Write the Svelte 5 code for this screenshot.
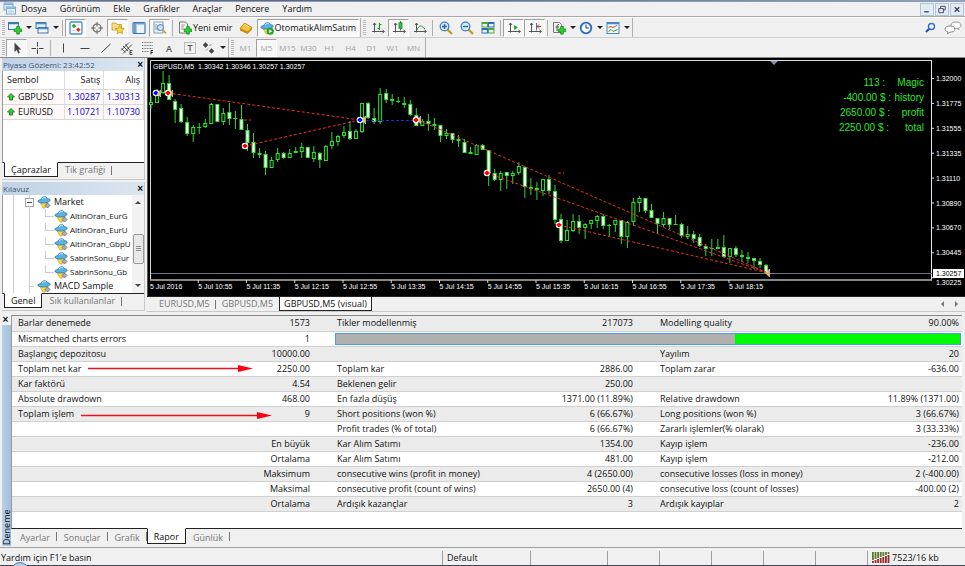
<script>
  const menus = ['Dosya', 'Görünüm', 'Ekle', 'Grafikler', 'Araçlar', 'Pencere', 'Yardım'];

  const mainTools = [
    { icon: 'newchart', label: 'Yeni grafik', drop: true },
    { icon: 'profiles', label: 'Profiller', drop: true },
    { sep: true },
    { icon: 'watch', label: 'Piyasa Gözlemi', on: true },
    { icon: 'target', label: 'Veri penceresi' },
    { icon: 'folder', label: 'Kılavuz', on: true },
    { icon: 'terminal', label: 'Terminal' },
    { icon: 'tester', label: 'Strateji deneme', on: true },
    { sep: true },
    { icon: 'order', label: 'Yeni emir', text: 'Yeni emir' },
    { icon: 'diamond', label: 'MetaEditor' },
    { icon: 'auto', label: 'OtomatikAlımSatım', text: 'OtomatikAlımSatım', on: true },
    { end: true },
    { icon: 'bars', label: 'Çubuk' },
    { icon: 'candles', label: 'Mum', on: true },
    { icon: 'line', label: 'Çizgi' },
    { sep: true },
    { icon: 'zoomin', label: 'Yakınlaştır' },
    { icon: 'zoomout', label: 'Uzaklaştır' },
    { icon: 'tile', label: 'Döşe' },
    { sep: true },
    { icon: 'scroll', label: 'Otomatik kaydır', on: true },
    { icon: 'shift', label: 'Grafik kaydır', on: true },
    { sep: true },
    { icon: 'indicators', label: 'Göstergeler', drop: true },
    { icon: 'clock', label: 'Periyotlar', drop: true },
    { icon: 'template', label: 'Şablonlar', drop: true }
  ];

  const drawTools = [
    { icon: 'cursor', label: 'İmleç', on: true },
    { icon: 'cross', label: 'Artı' },
    { sep: true },
    { icon: 'vline', label: 'Dikey çizgi' },
    { icon: 'hline', label: 'Yatay çizgi' },
    { icon: 'trend', label: 'Trend çizgisi' },
    { icon: 'channel', label: 'Kanal' },
    { icon: 'fibo', label: 'Fibonacci' },
    { icon: 'text', label: 'Metin' },
    { icon: 'label', label: 'Etiket' },
    { icon: 'arrows', label: 'Oklar', drop: true },
    { end: true },
    ...['M1', 'M5', 'M15', 'M30', 'H1', 'H4', 'D1', 'W1', 'MN'].map((p) => ({ period: p, on: p === 'M5' }))
  ];

  const quotes = [
    ['GBPUSD', '1.30287', '1.30313'],
    ['EURUSD', '1.10721', '1.10730']
  ];
  const advisors = ['AltinOran_EurG', 'AltinOran_EurU', 'AltinOran_GbpU', 'SabrinSonu_Eur', 'SabrinSonu_Gb'];

  // high, body top, body bottom, low; a trailing 1 marks a rising candle
  const candles = [
    [96,102,105,109,1],[89,93,103,103,1],[71,83,93,94,1],[75,83,100,100],[99,101,110,123],[104,108,122,123],
    [117,122,134,136],[125,127,134,142,1],[123,127,128,134,1],[119,123,127,128,1],[103,104,124,124,1],[104,104,122,122],
    [108,113,122,125,1],[103,112,119,125],[111,118,119,129],[105,119,130,130],[124,130,143,151],[133,142,153,158],
    [148,153,155,158],[151,154,168,175],[157,160,168,168,1],[148,153,160,162,1],[152,153,158,159],[149,153,158,158,1],
    [147,151,153,153,1],[143,147,152,158,1],[147,147,158,158],[146,152,159,162,1],[152,153,160,168],[145,146,161,161,1],
    [132,141,146,149,1],[135,136,142,146,1],[126,132,136,138,1],[121,131,139,140],[129,131,139,139,1],[103,103,132,133,1],
    [102,103,118,119],[108,118,122,124],[88,94,122,124,1],[89,93,100,103],[94,99,101,105],[97,101,102,103],
    [97,103,105,108],[100,104,115,116],[108,115,126,126],[119,121,126,126,1],[114,121,124,131],[118,124,126,130],
    [125,125,136,142],[129,133,136,139,1],[133,133,140,143],[135,139,141,147],[139,142,153,153],[147,152,154,154],
    [144,145,155,155,1],[144,145,150,150],[150,150,173,186],[169,173,180,181],[171,173,180,191,1],[172,172,176,189],
    [171,173,176,184,1],[162,166,173,175,1],[166,167,187,198],[178,187,189,195],[182,188,190,200],[179,179,191,196,1],
    [175,179,191,194],[185,191,220,224],[214,219,241,243],[220,230,241,241,1],[214,221,231,232,1],[215,221,228,234],
    [223,224,228,239,1],[220,220,224,229,1],[215,216,221,228,1],[214,216,226,229],[224,225,226,237],[220,220,225,232,1],
    [220,220,237,244],[221,222,237,248,1],[198,202,222,226,1],[196,198,203,212,1],[198,198,211,213],[204,210,218,218],
    [218,218,224,233],[212,218,225,227,1],[218,218,225,229],[215,224,225,225],[223,224,236,238],[226,234,237,239,1],
    [231,234,239,243],[234,237,246,247],[244,246,249,256],[239,248,249,256],[239,247,249,249,1],[235,247,257,257],
    [248,248,257,263,1],[246,248,255,257],[250,255,257,262],[252,257,259,263],[258,258,261,269],[258,261,265,268],
    [264,265,273,274]
  ];
  const cx = (i) => 151 + 6.03 * i;

  const prices = ['1.32000', '1.31775', '1.31555', '1.31335', '1.31110', '1.30890', '1.30670', '1.30445', '1.30225'];
  const times = ['5 Jul 2016', '5 Jul 10:55', '5 Jul 11:35', '5 Jul 12:15', '5 Jul 12:55', '5 Jul 13:35', '5 Jul 14:15',
    '5 Jul 14:55', '5 Jul 15:35', '5 Jul 16:15', '5 Jul 16:55', '5 Jul 17:35', '5 Jul 18:15'];
  const trades = [[168,93,360,120],[245,146,360,120],[416,119,768,273],[487,173,768,273],[559,225,768,273],[244,120,251,120],[558,173,564,173]];
  const info = [['113 :', 'Magic', 885], ['-400.00 $ :', 'history', 891], ['2650.00 $ :', 'profit', 890], ['2250.00 $ :', 'total', 889]];
  const marks = [[156,93,'#0000ff'],[168,93,'#ff0000'],[245,146,'#ff0000'],[360,120,'#0000ff'],[416,120,'#ff0000'],[487,173,'#ff0000'],[559,225,'#ff0000']];

  const report = [
    ['Barlar denemede', '1573', 'Tikler modellenmiş', '217073', 'Modelling quality', '90.00%'],
    ['Mismatched charts errors', '1'],
    ['Başlangıç depozitosu', '10000.00', '', '', 'Yayılım', '20'],
    ['Toplam net kar', '2250.00', 'Toplam kar', '2886.00', 'Toplam zarar', '-636.00'],
    ['Kar faktörü', '4.54', 'Beklenen gelir', '250.00', '', ''],
    ['Absolute drawdown', '468.00', 'En fazla düşüş', '1371.00 (11.89%)', 'Relative drawdown', '11.89% (1371.00)'],
    ['Toplam işlem', '9', 'Short positions (won %)', '6 (66.67%)', 'Long positions (won %)', '3 (66.67%)'],
    ['', '', 'Profit trades (% of total)', '6 (66.67%)', 'Zararlı işlemler(% olarak)', '3 (33.33%)'],
    ['', 'En büyük', 'Kar Alım Satımı', '1354.00', 'Kayıp işlem', '-236.00'],
    ['', 'Ortalama', 'Kar Alım Satımı', '481.00', 'Kayıp işlem', '-212.00'],
    ['', 'Maksimum', 'consecutive wins (profit in money)', '4 (2650.00)', 'consecutive losses (loss in money)', '2 (-400.00)'],
    ['', 'Maksimal', 'consecutive profit (count of wins)', '2650.00 (4)', 'consecutive loss (count of losses)', '-400.00 (2)'],
    ['', 'Ortalama', 'Ardışık kazançlar', '3', 'Ardışık kayıplar', '2']
  ];
  const testerTabs = ['Ayarlar', 'Sonuçlar', 'Grafik', 'Rapor', 'Günlük'];
</script>

{#snippet plus()}
  <path d="M8.700 5.500h2.600v2.500h2.500v2.600h-2.500v2.500h-2.600v-2.500h-2.500v-2.600h2.500z" fill="#2fd42f" stroke="#0a8a14" stroke-width=".8" />
{/snippet}

{#snippet axes()}
  <path d="M3.500 2v9.500M1 10.500h12M2 4l1.500-2L5 4M11.500 9l2 1.500-2 1.500" fill="none" stroke="#555" />
{/snippet}

{#snippet icon(name)}
  <svg class="ic" viewBox="0 0 14 14" aria-hidden="true">
    {#if name === 'newchart'}
      <rect x=".5" y="1.500" width="10" height="7" fill="#e8f2fb" stroke="#3c78a8" />
      <path d="M.5 2.500h10" stroke="#3c78a8" stroke-width="1.500" />
      {@render plus()}
    {:else if name === 'profiles'}
      <rect x="1" y="1.500" width="10" height="6" fill="#dcebf8" stroke="#3c78a8" />
      <rect x="3" y="6.500" width="10" height="5.500" fill="#eef6fc" stroke="#3c78a8" />
      <path d="M1 2.500h10M3 7.500h10" stroke="#4b8cc0" stroke-width="1.400" />
    {:else if name === 'watch'}
      <rect x="1" y="1" width="12" height="12" rx="1" fill="#f4fbff" stroke="#4a90c8" stroke-width="1.300" />
      <path d="M5 2.800l2.300 2.200L5 7.200 2.700 5z" fill="#2aa82a" />
      <path d="M9.300 6.500l2.300 2.300L9.300 11.100 7 8.800z" fill="#e03020" />
      <path d="M8.300 4h2M3.500 9.500h2" stroke="#b0c8dc" />
    {:else if name === 'target'}
      <circle cx="7" cy="7" r="4" fill="none" stroke="#666" stroke-width="1.200" />
      <path d="M7 1v4.500M7 8.500V13M1 7h4.500M8.500 7H13" stroke="#666" />
    {:else if name === 'folder'}
      <path d="M1 2h4l1 1.500h4.500V9H1z" fill="#fbe08a" stroke="#c89a28" stroke-width=".8" />
      <path d="M8.800 4.500l1.400 2.700 3 .4-2.200 2.100.5 3-2.700-1.400-2.700 1.400.5-3-2.200-2.100 3-.4z" fill="#ffd83a" stroke="#b8861a" stroke-width=".7" />
    {:else if name === 'terminal'}
      <rect x="1" y="1.500" width="12" height="11" rx="1" fill="#eaf4fc" stroke="#3c78b0" stroke-width="1.200" />
      <rect x="1.500" y="2" width="11" height="1.500" fill="#6ca4d4" />
      <rect x="1.500" y="3.500" width="3" height="8.500" fill="#6ca0d0" />
      <circle cx="2.800" cy="3" r=".8" fill="#e04030" />
    {:else if name === 'tester'}
      <rect x="1" y="1" width="9" height="11" fill="#eef5fb" stroke="#8a9cb0" />
      <path d="M3 3v6M5 4v6M7.500 3v4" stroke="#7aa0c8" />
      <circle cx="7.500" cy="6.500" r="3" fill="#cfe6fa" fill-opacity=".8" stroke="#4a80b8" />
      <path d="M10 9l3 3.500" stroke="#d0a030" stroke-width="1.800" />
    {:else if name === 'order'}
      <path d="M1.500 1h6l2 2v9h-8z" fill="#fafafa" stroke="#777" />
      <path d="M3 4h4M3 6h3M3 8h3" stroke="#999" />
      {@render plus()}
    {:else if name === 'diamond'}
      <path d="M1 7.500L5.500 2 13 6.500 8.500 11z" fill="#f5c433" stroke="#b07c10" stroke-width=".8" />
      <path d="M1 7.500v2L8.500 13v-2zM8.500 13L13 8.500v-2L8.500 11z" fill="#c88a18" />
      <path d="M5.500 3.500L10 6" stroke="#fdeaa0" />
    {:else if name === 'auto' || name === 'hat'}
      <path d="M3 7.500L6 13h2l3-5.500z" fill="#fbd84c" stroke="#b89020" stroke-width=".6" />
      <path d="M.8 6.500C1 4.800 3 4.800 4 4.600 4 1.500 9.500.5 10.500 3.800c1.500 0 3 .5 2.700 1.800C11 8.300 4 9 .8 6.500z" fill="#58b4e6" stroke="#1d6a9e" stroke-width=".7" />
      <path d="M5 3.800c1.500-1.500 3-1.500 4-.8" fill="none" stroke="#c4e8fa" />
      {#if name === 'auto'}
        <circle cx="10.300" cy="10.300" r="3.300" fill="#22b030" stroke="#0c7a18" stroke-width=".5" />
        <path d="M9.300 8.500v3.600l2.900-1.800z" fill="#fff" />
      {:else}
        <path d="M10.500 8l2.500 2.500-2.500 2.500L8 10.500z" fill="#b0b0b0" stroke="#666" stroke-width=".8" />
      {/if}
    {:else if name === 'bars'}
      {@render axes()}
      <path d="M8.500 2v7M6.500 7.500h2M8.500 3.500h2" stroke="#1d9a2d" stroke-width="1.200" />
    {:else if name === 'candles'}
      {@render axes()}
      <path d="M8.500 0v9.500" stroke="#1d9a2d" />
      <rect x="7" y="1.800" width="3" height="5.500" fill="#30c840" stroke="#14801f" stroke-width=".8" />
    {:else if name === 'line'}
      {@render axes()}
      <path d="M4 9c1-3 3-5 5-3.500L12 8" fill="none" stroke="#1d9a2d" />
    {:else if name === 'zoomin' || name === 'zoomout'}
      <path d="M8.500 8.500L13 13" stroke="#c89a28" stroke-width="2.400" />
      <circle cx="5.500" cy="5.500" r="4.300" fill="#d6ecfb" stroke="#3a7fc0" stroke-width="1.300" />
      <path d={name === 'zoomin' ? 'M3 5.500h5M5.500 3v5' : 'M3 5.500h5'} stroke="#2a66b0" stroke-width="1.400" />
    {:else if name === 'tile'}
      <rect x=".5" y="1" width="6.500" height="5.500" fill="#4aa838" /><rect x="7" y="1" width="6.500" height="5.500" fill="#3468c0" />
      <rect x=".5" y="7" width="6.500" height="5.500" fill="#3468c0" /><rect x="7" y="7" width="6.500" height="5.500" fill="#4aa838" />
      <path d="M1.500 3h4.500v2.500H1.500zM8 3h4.500v2.500H8zM1.500 9H6v2.500H1.500zM8 9h4.500v2.500H8z" fill="#e4f2fc" />
    {:else if name === 'scroll'}
      {@render axes()}
      <path d="M7 4v5l4-2.500z" fill="#22b030" />
    {:else if name === 'shift'}
      {@render axes()}
      <path d="M8.500 2v7.500" stroke="#3a78b0" /><path d="M13 5.500H9M11 3.500l-2 2 2 2" fill="none" stroke="#c04020" />
    {:else if name === 'indicators'}
      <path d="M1.500 1.500h6l2 2v8h-8z" fill="#f4f4f4" stroke="#777" />
      <path d="M7 3.500c-2 0-2 1-2 2.500v4M3.500 6H7" fill="none" stroke="#555" />
      {@render plus()}
    {:else if name === 'clock'}
      <circle cx="7" cy="7" r="5.300" fill="#f2f9ff" stroke="#2a6cc0" stroke-width="1.800" />
      <path d="M7 3.500V7h2.800" fill="none" stroke="#334" />
    {:else if name === 'template'}
      <rect x="1" y="1.500" width="12" height="11" fill="#f2f8fd" stroke="#4a88c0" />
      <path d="M1 2.500h12" stroke="#4a88c0" stroke-width="1.500" />
      <path d="M2.500 6.500l2.500-1 2 1 4-2" fill="none" stroke="#b05030" />
      <path d="M2.500 10.500l2.500-2 2 2 4.500-2" fill="none" stroke="#2a9a3a" />
    {:else if name === 'cursor'}
      <path d="M4.500 1.500v9.500l2.200-2 1.500 3.500 1.700-.8-1.600-3.200h3z" fill="#444" />
    {:else if name === 'cross'}
      <path d="M6.500 1v4.500M6.500 8.500V13M.5 7.500h4.500M8 7.500h4.500M6 7.500h1" stroke="#444" />
    {:else if name === 'vline'}
      <path d="M6.500 2.500v9" stroke="#444" />
    {:else if name === 'hline'}
      <path d="M2.500 7.500h9" stroke="#444" />
    {:else if name === 'trend'}
      <path d="M2.500 11.500l9-8.500" stroke="#444" />
    {:else if name === 'channel'}
      <path d="M1 9.500l8-8M3 12.500l9-9M3 5l5 5M5.500 3l4 6M1.500 7.500l4 4" stroke="#444" stroke-width=".9" />
      <path d="M12.500 9.500h-2.500v4h2.500M10 11.500h2" fill="none" stroke="#333" stroke-width=".9" />
    {:else if name === 'fibo'}
      <path d="M1 1.500h11M1 4.500h11M1 7.500h11M1 10.500h7" stroke="#777" stroke-dasharray="1 .6" />
      <path d="M12 9.500h-2v4M10 11.500h1.800" fill="none" stroke="#333" />
    {:else if name === 'text'}
      <text x="7" y="11" text-anchor="middle" font-size="9" font-weight="600" fill="#555">A</text>
    {:else if name === 'label'}
      <rect x="1.500" y="1.500" width="11" height="11" fill="none" stroke="#888" stroke-dasharray="1 1" />
      <text x="7" y="10" text-anchor="middle" font-size="9" font-weight="600" fill="#555">T</text>
    {:else if name === 'arrows'}
      <path d="M3.500 1.500L6 4 3.500 6.500 1 4zM9.500 7.500L12 10l-2.500 2.500L7 10zM7 4.500l2.500-1M4 9.500l2-2" fill="#444" stroke="#444" stroke-width=".5" />
    {:else if name === 'search'}
      <path d="M6.500 7.500L3 11" stroke="#2450b8" stroke-width="2.200" />
      <circle cx="8.500" cy="5.500" r="3" fill="#f0f6ff" stroke="#3a6ad0" stroke-width="1.400" />
    {:else if name === 'app'}
      <rect x="1" y="1" width="9" height="7" fill="#dcecf8" stroke="#7aaad4" />
      <rect x="3.500" y="5" width="9" height="7" fill="#eef6fc" stroke="#7aaad4" />
      <path d="M1 2.300h9M3.500 6.300h9" stroke="#7ab0dc" stroke-width="1.500" />
      <path d="M6 8.500v2M8 8v2.500M10 8.500v2" stroke="#7aaad4" stroke-width=".8" />
    {/if}
  </svg>
{/snippet}

{#snippet tools(list)}
  <span class="grip"></span>
  {#each list as t}
    {#if t.sep}
      <span class="sep"></span>
    {:else if t.end}
      <span class="end"></span><span class="grip"></span>
    {:else if t.period}
      <button class="tb period" class:on={t.on}>{t.period}</button>
    {:else}
      <button class="tb" class:on={t.on} class:drop={t.drop} class:wide={t.text} aria-label={t.label}>
        {@render icon(t.icon)}
        {#if t.text}<span>{t.text}</span>{/if}
        {#if t.drop}<i class="caret"></i>{/if}
      </button>
    {/if}
  {/each}
  <span class="end"></span>
{/snippet}

<div class="app">
  <div class="strip"></div>
  <nav class="menu">
    {@render icon('app')}
    {#each menus as m}<button>{m}</button>{/each}
    <div class="wins">
      <button aria-label="Küçült"><svg viewBox="0 0 12 12"><path d="M3 8.500h5" stroke="#445" stroke-width="1.500" /></svg></button>
      <button aria-label="Geri yükle"><svg viewBox="0 0 12 12"><path d="M4.500 4.500v-2h5v4h-2M2.500 5h5v4.500h-5z" fill="none" stroke="#445" /></svg></button>
      <button aria-label="Kapat"><svg viewBox="0 0 12 12"><path d="M3.500 3.500l5 5M8.500 3.500l-5 5" stroke="#445" stroke-width="1.500" /></svg></button>
    </div>
  </nav>
  <div class="toolbar">
    {@render tools(mainTools)}
    <div class="right">
      <button class="tb" aria-label="Ara">{@render icon('search')}</button>
      <button class="tb" aria-label="Sohbet">
        <svg class="chat" viewBox="0 0 18 14"><path d="M12 1c3 0 5 1.200 5 3.200 0 1.500-1 2.400-2.500 2.800l.5 1.500-2-1.200C9.500 7.500 7 6.300 7 4.200S9 1 12 1z" fill="#fafafa" stroke="#999" /><path d="M6 5c3 0 5 1.200 5 3.100s-2 3-5 3l-2.500 1.700.4-2C2 10.300 1 9.500 1 8.100 1 6.200 3 5 6 5z" fill="#fff" stroke="#888" /></svg>
      </button>
    </div>
  </div>
  <div class="toolbar second">{@render tools(drawTools)}</div>

  <div class="work">
    <aside>
      <section class="panel market">
        <header><span>Piyasa Gözlemi: 23:42:52</span><button class="x" aria-label="Kapat">×</button></header>
        <div class="box">
          <table class="quotes">
            <thead><tr><th>Sembol</th><th>Satış</th><th>Alış</th></tr></thead>
            <tbody>
              {#each quotes as q}
                <tr>
                  <td><svg viewBox="0 0 8 8" aria-hidden="true"><path d="M4 .5L7.500 4H5.500v3h-3V4H.5z" fill="#3ccc3c" stroke="#157a15" stroke-width=".9" /></svg>{q[0]}</td>
                  <td>{q[1]}</td><td>{q[2]}</td>
                </tr>
              {/each}
            </tbody>
          </table>
        </div>
        <div class="tabs"><button class="act">Çaprazlar</button><button>Tik grafiği</button></div>
      </section>
      <section class="panel nav">
        <header><span>Kılavuz</span><button class="x" aria-label="Kapat">×</button></header>
        <div class="box tree">
          <ul>
            <li class="l1"><i class="minus"></i>{@render icon('hat')}Market</li>
            {#each advisors as a}<li class="l2">{@render icon('hat')}{a}</li>{/each}
            <li class="l1"><i class="dash"></i>{@render icon('hat')}MACD Sample</li>
          </ul>
          <div class="scroll"><i class="up"></i><b></b><i class="down"></i></div>
        </div>
        <div class="tabs"><button class="act">Genel</button><button>Sık kullanılanlar</button></div>
      </section>
    </aside>

    <main>
      <div class="chart">
        <svg viewBox="148 58 817 238" role="img" aria-label="GBPUSD,M5">
          <path d="M150.500 280V60.500H932" fill="none" stroke="#d8d8d8" />
          <path d="M931.500 60v220" stroke="#e8e8e8" />
          <path d="M150 280h782" stroke="#b4b4b4" stroke-width="1.500" />
          <path d="M151 273.500h781" stroke="#6c7484" />
          <text x="153" y="69" class="ax">GBPUSD,M5&nbsp; 1.30342 1.30346 1.30257 1.30257</text>
          {#each candles as [h, t, b, l, up], i}
            <rect x={cx(i) - 0.5} y={h} width="1" height={l - h} fill="#30d830" />
            <rect x={cx(i) - 2} y={t} width="4" height={Math.max(b - t, 1)} fill="#30e030" />
            {#if b - t > 2}
              <rect x={cx(i) - 1} y={t + 1} width="2" height={b - t - 2} fill={up ? '#031803' : '#fff'} />
            {/if}
          {/each}
          {#each trades as [x1, y1, x2, y2]}
            <path d="M{x1} {y1}L{x2} {y2}" stroke="#e8301c" stroke-dasharray="3 2" />
          {/each}
          <path d="M366 120.500h48" stroke="#2424e8" stroke-dasharray="3 2" />
          {#each marks as [x, y, c]}
            <circle cx={x} cy={y} r="3.300" fill="#fff" />
            <path d="M{x - 3} {y}l3-2.500 3 2.500-3 2.500z" fill={c} />
          {/each}
          <path d="M160.500 90v7l-3-3.500zM172.500 90v7l-2-3.500zM365.500 116v8l-3-4zM420.500 116v8l-2-4zM769.500 269v8l-4-4z" fill="#f2b53a" stroke="#fff" stroke-width=".5" />
          <path d="M770 61h8l-4 4z" fill="#8292a4" />
          {#each info as [v, n, x], i}
            <text {x} y={86 + i * 15} class="inf">{v}</text>
            <text x="924" y={86 + i * 15} class="inf">{n}</text>
          {/each}
          {#each prices as p, i}
            <path d="M931 {78.5 + i * 24.9}h3" stroke="#ddd" />
            <text x="936" y={i === 8 ? 285 : 81 + i * 24.9} class="ax">{p}</text>
          {/each}
          <rect x="933" y="269" width="31" height="9" fill="#fff" />
          <text x="936" y="276" class="ax dark">1.30257</text>
          {#each times as t, i}
            {#if i}<path d="M{150 + i * 48.25} 280v3" stroke="#ddd" />{/if}
            <text x={150 + i * 48.25} y="289" class="ax">{t}</text>
          {/each}
        </svg>
      </div>
      <div class="mdi">
        <button>EURUSD,M5</button><button>GBPUSD,M5</button><button class="act">GBPUSD,M5 (visual)</button>
        <span class="arrows"><i class="lt"></i><i class="rt"></i></span>
      </div>
    </main>
  </div>

  <section class="tester">
    <div class="side"><button class="x" aria-label="Kapat">×</button><span>Deneme</span></div>
    <div class="body">
      <div class="sheet">
        <table class="report">
          <colgroup><col class="c1" /><col class="c2" /><col class="c3" /><col class="c4" /><col class="c5" /><col class="c6" /></colgroup>
          <tbody>
            {#each report as r}
              <tr>
                {#each r as c, i}<td class:num={i % 2}>{c}</td>{/each}
                {#if r.length === 2}<td colspan="4" class="q"><div class="quality"><i></i></div></td>{/if}
              </tr>
            {/each}
          </tbody>
        </table>
        <svg class="hint" viewBox="0 0 270 110" aria-hidden="true">
          <path d="M76 52.500h152M69 99.500h178" stroke="#e8141c" stroke-width="1.500" />
          <path d="M226 49l15 3.500-15 3.500zM245 96l15 3.500-15 3.500z" fill="#ff0010" />
        </svg>
      </div>
      <div class="tabs big">
        {#each testerTabs as t}<button class:act={t === 'Rapor'}>{t}</button>{/each}
      </div>
    </div>
  </section>

  <footer>
    <span class="grow">Yardım için F1'e basın</span>
    <span class="s88">Default</span><span class="s77"></span><span class="s53"></span><span class="s53"></span><span class="s53"></span><span class="s53"></span><span class="s53"></span>
    <span class="s96">
      <svg viewBox="0 0 18 11" aria-hidden="true">
        {#each [0, 1, 2, 3, 4, 5, 6] as n}
          <rect x={n * 2.6} y="0" width="1.800" height={8 - n} fill="#5c7a2c" />
          <rect x={n * 2.6} y={9 - n} width="1.800" height={2 + n} fill="#a02828" />
        {/each}
      </svg>7523/16 kb</span>
  </footer>
  <div class="task"><i></i></div>
</div>

<style>
  :global(body) { background: #f0f0f0; }
  .app {
    display: flex; flex-direction: column; height: 100vh; min-height: 566px; overflow: hidden;
    background: #f0f0f0; color: #111; font: 9px/12px "Open Sans", "Noto Sans", sans-serif;
  }
  .app * { box-sizing: border-box; }
  button { font: inherit; color: inherit; background: none; border: 0; padding: 0; margin: 0; white-space: nowrap; }
  .strip { height: 2px; background: linear-gradient(90deg, #6b7590, #56648c 40%, #8fa6c4); border-bottom: 1px solid #8d9ab0; flex: none; }
  .menu { flex: none; height: 15px; display: flex; align-items: center; gap: 13px; border-bottom: 1px solid #a8a8a8; padding-left: 3px; }
  .menu .ic { margin-right: -9px; }
  .wins { margin-left: auto; display: flex; gap: 1px; padding-right: 1px; }
  .wins button { width: 14px; height: 13px; background: #e0edf6; border: 1px solid #b4c4d4; display: flex; }
  .wins svg { width: 12px; height: 11px; }
  .toolbar { flex: none; height: 20px; display: flex; align-items: center; border-top: 1px solid #fff; padding-left: 2px; }
  .second { height: 21px; border-bottom: 1px solid #888; border-top-color: #d0d0d0; }
  .ic { width: 14px; height: 14px; flex: none; }
  .grip { width: 3px; height: 15px; margin-right: 1px; background: repeating-linear-gradient(#b8b8b8 0 1px, #f0f0f0 1px 2px); }
  .sep { width: 1px; height: 16px; margin: 0 2px; background: #b0b0b0; }
  .end { width: 1px; height: 19px; margin: 0 2px 0 1px; background: #b0b0b0; }
  .tb { width: 21px; height: 18px; display: flex; align-items: center; justify-content: center; gap: 1px; border: 1px solid transparent; flex: none; }
  .tb.drop { width: 27px; gap: 4px; }
  .tb.wide { width: auto; padding: 0 2px; gap: 1px; }
  .tb.on { border-color: #a0a0a0 #fff #fff #a0a0a0; background: #f8f8f8; }
  .tb.period { font-size: 8px; color: #a0a0a0; }
  .caret { border: 3px solid transparent; border-top-color: #222; border-bottom: 0; }
  .right { margin-left: auto; display: flex; gap: 2px; padding-right: 2px; }
  .chat { width: 18px; height: 14px; flex: none; }

  .work { flex: 1; min-height: 0; display: flex; }
  aside { flex: none; width: 147px; display: flex; flex-direction: column; padding: 0 2px 2px; gap: 2px; }
  .panel { display: flex; flex-direction: column; min-height: 0; border-right: 1px solid #c8c8c8; border-bottom: 1px solid #c8c8c8; }
  .market { height: 122px; flex: none; }
  .nav { flex: 1; }
  .panel header { display: flex; justify-content: space-between; align-items: center; height: 13px; flex: none; padding: 0 1px; background: linear-gradient(90deg, #c0d2e6, #dce6f0); color: #40566e; font-size: 8px; }
  .x { color: #111; font: bold 10px/9px "Liberation Sans", sans-serif; }
  .box { flex: 1; min-height: 0; overflow: hidden; background: #fff; border-bottom: 1px solid #222; border-left: 1px solid #999; }
  .quotes { width: 100%; border-collapse: collapse; table-layout: fixed; }
  .quotes th, .quotes td { font-weight: 400; height: 15px; padding: 0 3px 0 0; text-align: right; border-right: 1px solid #ddd; border-bottom: 1px solid #d8d8d8; }
  .quotes th { height: 18px; }
  .quotes th:first-child, .quotes td:first-child { width: 61px; text-align: left; padding-left: 4px; }
  .quotes td { color: #0000e0; background: #fff8f8; }
  .quotes td:first-child { color: #111; }
  .quotes svg { width: 8px; height: 8px; margin-right: 3px; vertical-align: -1px; }
  .tabs { display: flex; flex: none; height: 16px; align-items: flex-start; padding-left: 2px; color: #777; }
  .tabs button { height: 14px; padding: 0 7px; position: relative; }
  .tabs button:not(.act)::after { content: ""; position: absolute; right: 0; top: 3px; width: 1px; height: 9px; background: #777; }
  .tabs .act { margin-top: -1px; height: 15px; background: #fff; color: #111; border: 1px solid #222; border-top-color: #fff; padding: 0 6px; }
  .tree { display: flex; }
  .tree ul { flex: 1; min-width: 0; margin: 0; padding: 0; list-style: none; display: flex; flex-direction: column; overflow: hidden;
    background: linear-gradient(#ccc, #ccc) 10px 0 / 1px 100% no-repeat, linear-gradient(#ccc, #ccc) 26px 0 / 1px 100% no-repeat; }
  .tree li { flex: 1; display: flex; align-items: center; gap: 3px; white-space: nowrap; }
  .l1 { padding-left: 22px; }
  .tree .l2 { padding-left: 51px; position: relative; font-size: 8px; gap: 2px; }
  .l2::before { content: ""; position: absolute; left: 42px; top: 0; width: 8px; height: 50%; border-left: 1px solid #ccc; border-bottom: 1px solid #ccc; }
  .minus { width: 9px; height: 9px; border: 1px solid #aaa; background: linear-gradient(#446, #446) center / 5px 1px no-repeat #fff; }
  .dash { width: 9px; height: 1px; background: linear-gradient(90deg, #fff0 4px, #ccc 4px); }
  .scroll { width: 12px; flex: none; background: #f2f2f2; display: flex; flex-direction: column; align-items: center; padding: 6px 0; }
  .scroll b { width: 11px; height: 30px; margin-top: 30px; border: 1px solid #999; border-radius: 2px; background: repeating-linear-gradient(#888 0 1px, #eee 1px 2px) center / 5px 6px no-repeat #e8e8e8; }
  .scroll i { border: 3px solid transparent; }
  .up { border-bottom-color: #444 !important; border-top: 0 !important; }
  .down { border-top-color: #444 !important; border-bottom: 0 !important; margin-top: auto; }

  main { flex: 1; min-width: 0; display: flex; flex-direction: column; }
  .chart { flex: 1; min-height: 0; background: #000; border-left: 1px solid #555; }
  .chart svg { display: block; width: 100%; height: 100%; }
  .ax { font: 7px "Liberation Sans", sans-serif; fill: #fff; }
  .ax.dark { fill: #000; }
  .inf { font: 10px "Liberation Sans", sans-serif; fill: #2ee62e; text-anchor: end; }
  .mdi { flex: none; height: 17px; display: flex; align-items: flex-start; border-top: 1px solid #222; box-shadow: inset 0 -1px #f0f0f0, inset 0 -2px #c8c8c8; color: #777; padding-left: 6px; }
  .mdi button { height: 14px; padding: 0 6px; position: relative; }
  .mdi button:first-child::after { content: ""; position: absolute; right: 0; top: 3px; width: 1px; height: 9px; background: #777; }
  .mdi .act { color: #111; background: #fff; border: 1px solid #222; border-top: 0; padding: 0 4px; }
  .arrows { margin-left: auto; display: flex; gap: 11px; padding: 4px 7px 0 0; }
  .arrows i { border: 3px solid transparent; }
  .lt { border-right-color: #777 !important; border-left: 0 !important; }
  .rt { border-left-color: #777 !important; border-right: 0 !important; }

  .tester { flex: none; display: flex; height: 235px; border-bottom: 1px solid #a0a0a0; }
  .side { width: 11px; flex: none; display: flex; flex-direction: column; align-items: center; padding-top: 1px; }
  .side .x { height: 11px; }
  .side span { flex: 1; width: 9px; margin-left: 1px; writing-mode: vertical-rl; transform: rotate(180deg); background: linear-gradient(90deg, #a4c0dc, #b8d0e8); line-height: 9px; text-align: left; padding-top: 1px; margin-bottom: 1px; }
  .body { flex: 1; min-width: 0; display: flex; flex-direction: column; padding-right: 3px; }
  .sheet { position: relative; flex: 1; background: #fff; border-top: 1px solid #888; border-left: 1px solid #999; border-bottom: 1px solid #222; margin-top: 2px; }
  .report { width: 100%; table-layout: fixed; border-collapse: collapse; }
  .report td { height: 15px; padding: 0 0 0 6px; border-bottom: 1px solid #d0d0d0; white-space: nowrap; line-height: 12px; }
  .report tr:nth-child(odd) td { background: #ebebeb; }
  .report .num { text-align: right; padding: 0 21px 0 0; }
  .report .num:last-child { padding-right: 3px; }
  .c1 { width: 205px; } .c2 { width: 12%; } .c3 { width: 22%; } .c4 { width: 12%; } .c5 { width: 20%; }
  .report .q { padding: 0 1px 0 4px; }
  .quality { height: 12px; border: 1px solid #4a9ae8; background: #b0b0b0; display: flex; justify-content: flex-end; }
  .quality i { width: 36%; background: #00fa00; }
  .hint { position: absolute; left: 0; top: 0; width: 270px; height: 110px; }
  .big { height: 18px; padding-left: 2px; }
  .big button { padding: 1px 7px 0; height: 16px; }
  .big .act { height: 16px; padding: 1px 6px 0; }

  footer { flex: none; height: 17px; display: flex; align-items: center; line-height: 14px; padding: 2px 0 0 1px; }
  footer span { height: 14px; display: flex; align-items: center; gap: 2px; flex: none; border-left: 1px solid #a0a0a0; padding-left: 4px; }
  footer .grow { flex: 1; border: 0; padding: 0; }
  .s88 { width: 88px; } .s77 { width: 77px; } .s53 { width: 52px; } .s96 { width: 98px; }
  footer svg { width: 18px; height: 11px; }
  .task { position: relative; flex: none; height: 1px; background: #3c4658; }
  .task i { position: absolute; left: 11px; bottom: -14px; width: 18px; height: 18px; border-radius: 50%; border: 1px solid #5878a0; background: #b4cce4; }
</style>
